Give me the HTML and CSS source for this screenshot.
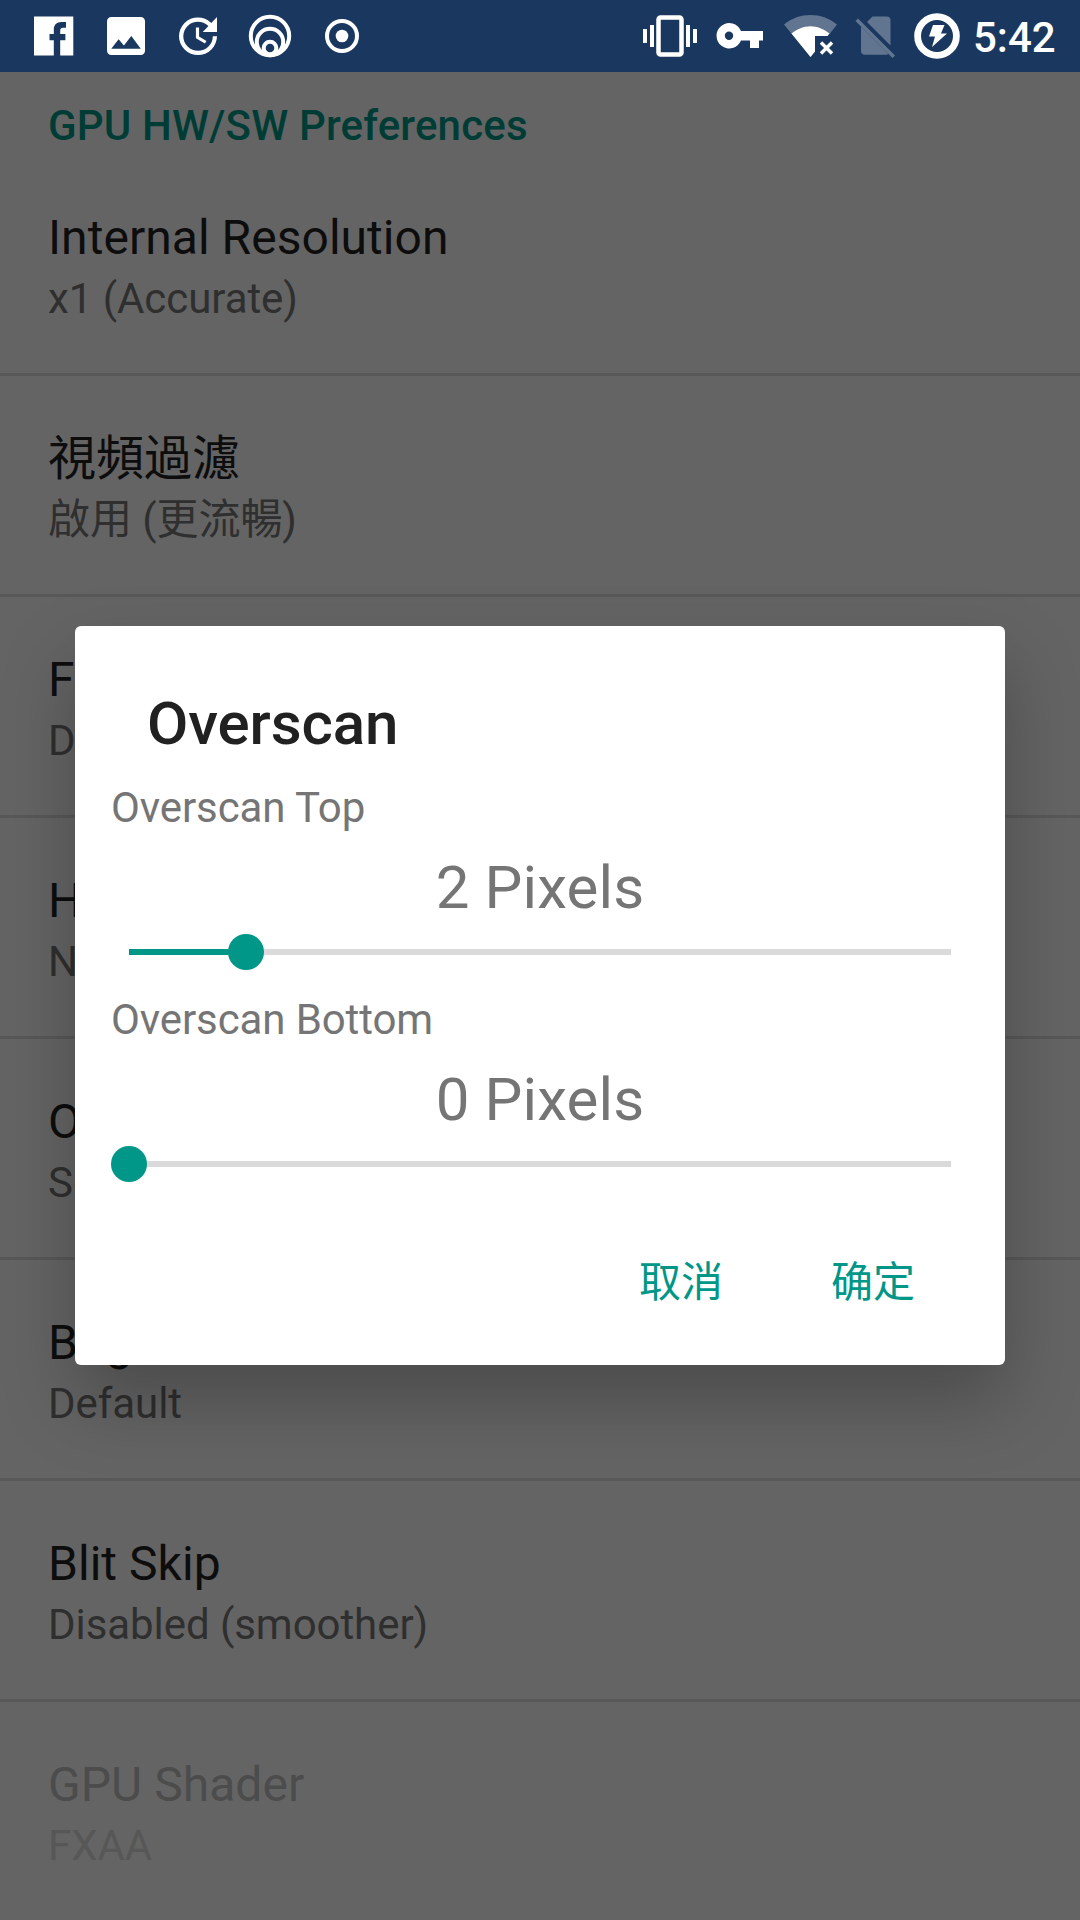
FILE: index.html
```html
<!DOCTYPE html>
<html lang="zh">
<head>
<meta charset="utf-8">
<title>GPU Preferences</title>
<link rel="stylesheet" href="styles.css">
</head>
<body>
<div class="screen">
  <header class="status-bar">
    <svg class="status-icons" viewBox="0 0 360 72" width="360" height="72" fill="#fff">
      <path fill-rule="evenodd" d="M34 16.500h39.300v39H60.200V40.300h5.200v-6.300h-5.200v-3.300c0-1.900.9-2.900 2.900-2.900h2.900v-5.900h-4.400c-5.200 0-7.800 2.900-7.800 7.700v4.400h-4.300v6.300h4.300v15.200H34z"/>
      <path transform="translate(100.7 10.7) scale(2.11)" d="M21 19V5c0-1.100-.9-2-2-2H5c-1.100 0-2 .9-2 2v14c0 1.100.9 2 2 2h14c1.100 0 2-.9 2-2zM8.500 13.500l2.500 3.010L14.500 12l4.500 6H5l3.500-4.500z"/>
      <path transform="translate(172.700 10.700) scale(2.11)" d="M21 10.120h-6.780l2.740-2.820c-2.730-2.700-7.150-2.800-9.880-.1-2.730 2.710-2.730 7.080 0 9.790 2.730 2.710 7.150 2.710 9.880 0C18.320 15.650 19 14.080 19 12.100h2c0 1.980-.88 4.550-2.640 6.290-3.510 3.480-9.210 3.480-12.720 0-3.500-3.470-3.530-9.110-.02-12.580 3.510-3.470 9.140-3.470 12.650 0L21 3v7.120zM12.500 8v4.250l3.500 2.080-.72 1.210L11 13V8h1.500z"/>
      <g fill="none" stroke="#fff" stroke-width="4">
        <circle cx="270" cy="36" r="19.200"/>
        <circle cx="270" cy="42" r="13.200"/>
        <circle cx="270" cy="48" r="6.300"/>
        <circle cx="342" cy="36" r="15"/>
      </g>
      <circle cx="342" cy="36" r="6.300"/>
    </svg>
    <div class="status-right">
      <svg class="status-icons" viewBox="630 0 340 72" width="340" height="72" fill="#fff">
        <rect x="658.500" y="17.500" width="23" height="37" rx="2" fill="none" stroke="#fff" stroke-width="4.500"/>
        <path d="M643 29h4v14h-4zM650 25h4v22h-4zM686 25h4v22h-4zM693 29h4v14h-4z"/>
        <path fill-rule="evenodd" d="M741 31h22v9.500h-4V48h-9v-7.500h-9a12.700 12.700 0 1 1 0-9.500zM729 31.500a4.200 4.200 0 1 0 0 8.400 4.200 4.200 0 0 0 0-8.400z"/>
        <path fill="#617590" d="M784 24.500C792 18 801 15 810.500 15S829 18 837 24.500L829.500 34H815v17.500L810.500 57z"/>
        <path d="M791.500 33.500C797 29 804 26.200 810.500 26.200S824 29 829.500 33.500L827.500 36H815v15.500L810.500 57z"/>
        <path d="M821 42.500l11 11M832 42.500l-11 11" stroke="#fff" stroke-width="3.500"/>
        <g fill="#617590">
          <path d="M872.500 16.500h14q4 0 4 4V45.500L867 22zM861 26.500L888.500 54q-1 .8-2.500.8h-21q-4 0-4-4z"/>
          <path d="M855.500 21l2.500-2.500L895 55.500l-2.500 2.500z"/>
        </g>
        <circle cx="937" cy="36" r="19.400" fill="none" stroke="#fff" stroke-width="6.800"/>
        <path d="M933 25h11.500l-3.500 8.500h6L932 47l3-10.500h-6z"/>
      </svg>
      <span class="clock">5:42</span>
    </div>
  </header>

  <main class="settings">
    <h2 class="category">GPU HW/SW Preferences</h2>
    <section class="row"><div class="row-title">Internal Resolution</div><div class="row-summary">x1 (Accurate)</div></section>
    <section class="row"><div class="row-title">視頻過濾</div><div class="row-summary">啟用 (更流暢)</div></section>
    <section class="row"><div class="row-title">Frame Skip</div><div class="row-summary">Disabled</div></section>
    <section class="row"><div class="row-title">HW Textures</div><div class="row-summary">None</div></section>
    <section class="row"><div class="row-title">Overscan</div><div class="row-summary">Set Overscan</div></section>
    <section class="row"><div class="row-title">Brightness</div><div class="row-summary">Default</div></section>
    <section class="row"><div class="row-title">Blit Skip</div><div class="row-summary">Disabled (smoother)</div></section>
    <section class="row disabled"><div class="row-title">GPU Shader</div><div class="row-summary">FXAA</div></section>
  </main>

  <div class="dialog" role="dialog">
    <h1 class="dialog-title">Overscan</h1>
    <div class="field">
      <div class="field-label">Overscan Top</div>
      <div class="field-value">2 Pixels</div>
      <div class="slider"><div class="slider-fill" style="width:117px"></div><div class="thumb"></div><div class="slider-rest"></div></div>
    </div>
    <div class="field">
      <div class="field-label">Overscan Bottom</div>
      <div class="field-value">0 Pixels</div>
      <div class="slider"><div class="slider-fill" style="width:0"></div><div class="thumb"></div><div class="slider-rest"></div></div>
    </div>
    <div class="actions"><span class="button">取消</span><span class="button">确定</span></div>
  </div>
</div>
</body>
</html>
```

FILE: styles.css
```css
* { box-sizing: border-box; }

body {
  margin: 0;
  font-family: Roboto, "Noto Sans CJK SC", sans-serif;
}

.screen {
  position: relative;
  width: 1080px;
  height: 1920px;
  overflow: hidden;
  background: #646464;
}

.status-bar {
  display: flex;
  justify-content: space-between;
  height: 72px;
  background: #1a385f;
}

.status-icons { display: block; flex: none; }

.status-right {
  display: flex;
  width: 450px;
}

.clock {
  padding: 13px 0 0 3px;
  color: #fff;
  font-size: 42px;
  font-weight: 500;
  line-height: 49px;
}

.category {
  margin: 0;
  height: 83px;
  padding: 29px 48px 0;
  color: #003c36;
  font-size: 42px;
  font-weight: 500;
  line-height: 49px;
  letter-spacing: .16px;
}

.row {
  height: 221px;
  padding: 55px 48px 0;
  border-bottom: 3px solid #585858;
}

.row-title {
  height: 64px;
  color: #0d0d0d;
  font-size: 48px;
  line-height: 56px;
  letter-spacing: .04px;
}

.row-summary {
  color: #2f2f2f;
  font-size: 42px;
  line-height: 49px;
  letter-spacing: -.06px;
}

.disabled .row-title { color: #4c4c4c; }
.disabled .row-summary { color: #575757; }

.dialog {
  position: absolute;
  top: 626px;
  left: 75px;
  width: 930px;
  height: 739px;
  padding: 63px 36px 0;
  border-radius: 6px;
  background: #fff;
  box-shadow: 0 36px 72px rgba(0, 0, 0, .25);
}

.dialog-title {
  margin: 0;
  height: 94px;
  padding-left: 36px;
  color: #212121;
  font-size: 60px;
  font-weight: 500;
  line-height: 70px;
  letter-spacing: -.1px;
}

.field {
  height: 212px;
  color: #757575;
}

.field-label {
  height: 70px;
  font-size: 42px;
  line-height: 49px;
  letter-spacing: -.1px;
}

.field-value {
  height: 81px;
  font-size: 60px;
  line-height: 70px;
  letter-spacing: .12px;
  text-align: center;
}

.slider {
  display: flex;
  align-items: center;
  height: 36px;
  margin-right: 18px;
}

.slider-fill {
  height: 6px;
  margin-left: 18px;
  background: #009688;
}

.thumb {
  flex: none;
  width: 36px;
  height: 36px;
  margin: 0 -1px 0 -18px;
  border-radius: 50%;
  background: #009688;
  z-index: 1;
}

.slider-rest {
  flex: 1;
  height: 6px;
  background: #dadada;
}

.actions {
  display: flex;
  justify-content: flex-end;
  gap: 108px;
  padding: 51px 54px 0 0;
  color: #009688;
  font-size: 42px;
  line-height: 49px;
}
```
